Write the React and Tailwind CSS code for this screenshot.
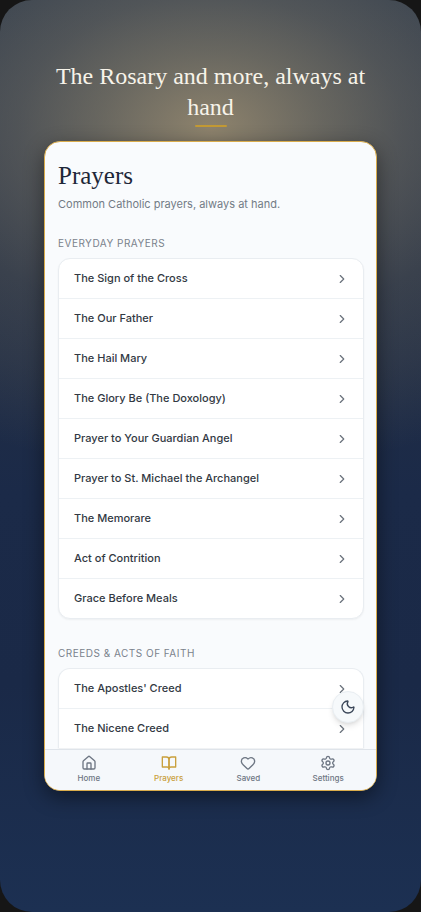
import React, { useState } from 'react';
import { ChevronRight, Heart, House, Moon, Settings } from 'lucide-react';
import { FiBookOpen } from 'react-icons/fi';
import clsx from 'clsx';

const everydayPrayers = [
  'The Sign of the Cross',
  'The Our Father',
  'The Hail Mary',
  'The Glory Be (The Doxology)',
  'Prayer to Your Guardian Angel',
  'Prayer to St. Michael the Archangel',
  'The Memorare',
  'Act of Contrition',
  'Grace Before Meals',
];

const creeds = ["The Apostles' Creed", 'The Nicene Creed'];

const tabs = [
  { label: 'Home', icon: House },
  { label: 'Prayers', icon: FiBookOpen },
  { label: 'Saved', icon: Heart },
  { label: 'Settings', icon: Settings },
];

const PrayerSection = ({ title, prayers, open }) => (
  <section>
    <h3 className="text-[10px] leading-4 tracking-wider text-[#7a828c] uppercase">
      {title}
    </h3>
    <ul
      className={clsx(
        'mt-[7px] divide-y divide-[#edf1f4] border border-[#e9edf1] bg-white shadow-xs',
        open ? 'rounded-t-xl border-b-0' : 'rounded-xl'
      )}
    >
      {prayers.map((name) => (
        <li key={name}>
          <button
            type="button"
            className="flex h-[39px] w-full items-center justify-between pr-3.5 pl-[15px] text-left text-[11px] font-medium text-[#323943]"
          >
            {name}
            <ChevronRight className="size-3.5 text-[#69717b]" />
          </button>
        </li>
      ))}
    </ul>
  </section>
);

const TabBar = ({ active, onSelect }) => (
  <nav className="grid h-[41px] shrink-0 grid-cols-4 border-t border-[#dfe4ea] bg-[#f5f8fb] pr-2 pb-0.5 pl-1">
    {tabs.map(({ label, icon: Icon }) => (
      <button
        key={label}
        type="button"
        onClick={() => onSelect(label)}
        className={clsx(
          'flex flex-col items-center justify-center gap-0.5 text-[8px] leading-[10px] font-medium',
          active === label ? 'text-[#c9a03c]' : 'text-[#6d7683]'
        )}
      >
        <Icon className="size-4" strokeWidth={2} />
        {label}
      </button>
    ))}
  </nav>
);

const App = () => {
  const [activeTab, setActiveTab] = useState('Prayers');

  return (
    <div className="h-screen bg-[#161616] font-['Inter',sans-serif]">
      <div className="flex h-full flex-col rounded-[32px] bg-[radial-gradient(ellipse_120%_38%_at_50%_14%,rgba(160,145,115,0.85)_0%,rgba(156,143,114,0.56)_22%,rgba(150,138,112,0.38)_38%,rgba(140,130,105,0.22)_58%,rgba(130,120,95,0.14)_78%,rgba(130,120,95,0)_100%),linear-gradient(to_bottom,#27354a_0%,#232f45_30%,#1b2a48_54%,#1a2947_75%,#1c3052_100%)] px-11 pt-[61px] pb-[121px]">
        {/* Headline */}
        <header className="flex flex-col items-center pb-3.5">
          <h1 className="text-center font-['Liberation_Serif',serif] text-2xl leading-[31px] text-[#f7f3e9]">
            The Rosary and more, always at hand
          </h1>
          <div className="mt-0.5 h-0.5 w-8 rounded-full bg-[#c39a35]" />
        </header>

        {/* App screen */}
        <main className="relative flex min-h-0 flex-1 flex-col overflow-hidden rounded-2xl border border-[#d9ac4c] bg-[#f9fbfd] shadow-[0_6px_20px_rgba(0,0,0,0.45)]">
          <div className="min-h-0 flex-1 overflow-y-auto pt-4 pr-3 pl-[13px] [scrollbar-width:none]">
            <h2 className="font-['Liberation_Serif',serif] text-[25px] leading-9 font-medium text-[#1e2738]">
              Prayers
            </h2>
            <p className="mt-0.5 text-[11px] leading-4 text-[#737b86]">
              Common Catholic prayers, always at hand.
            </p>
            <div className="mt-[23px] space-y-[26px]">
              <PrayerSection title="Everyday Prayers" prayers={everydayPrayers} />
              <PrayerSection title="Creeds & Acts of Faith" prayers={creeds} open />
            </div>
          </div>

          <TabBar active={activeTab} onSelect={setActiveTab} />

          <button
            type="button"
            aria-label="Dark mode"
            className="absolute right-3 bottom-[67px] flex size-8 items-center justify-center rounded-full border border-[#e9eef2] bg-[#f6f9fb] text-[#3a4658] shadow-md"
          >
            <Moon className="size-4" />
          </button>
        </main>
      </div>
    </div>
  );
};

export default App;
